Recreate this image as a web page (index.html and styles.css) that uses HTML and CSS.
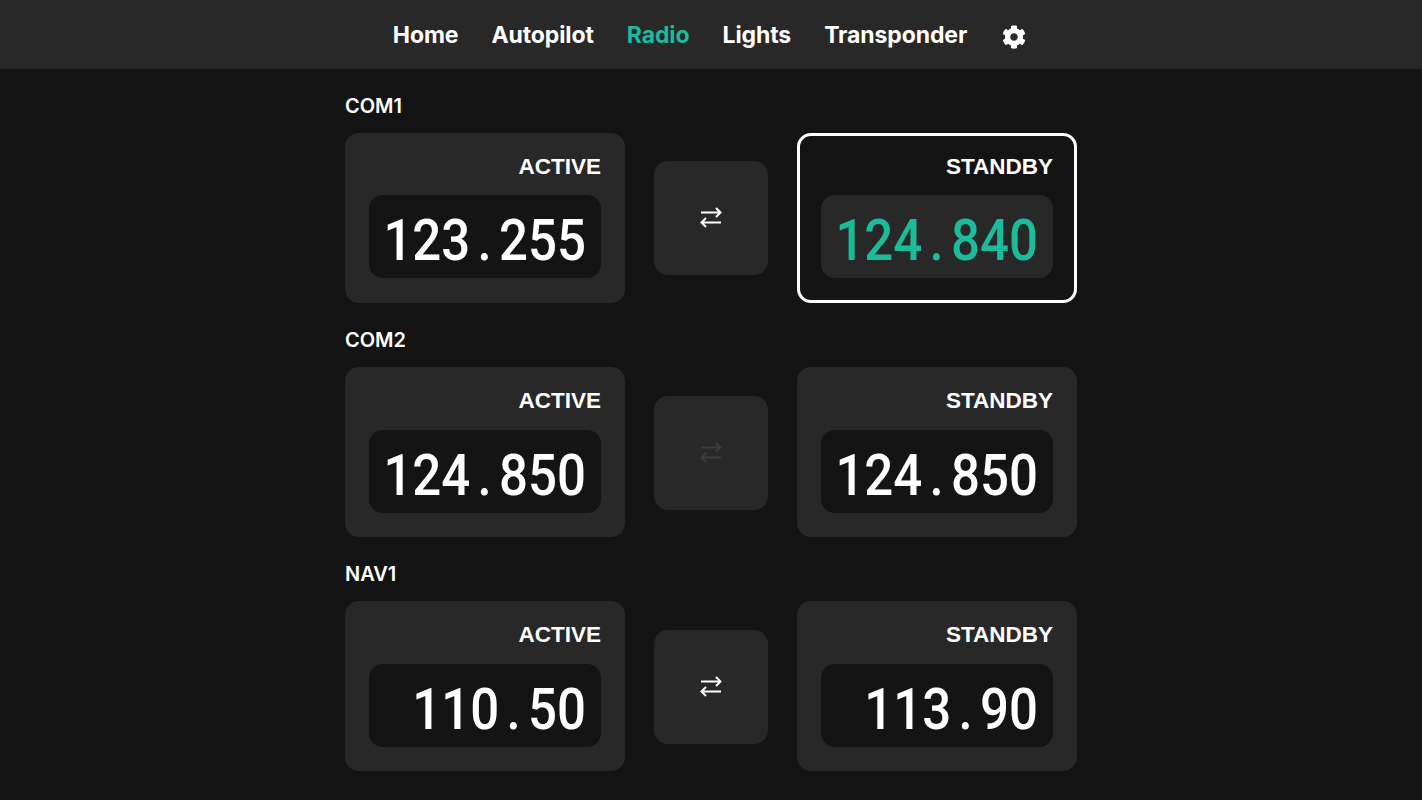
FILE: index.html
```html
<!DOCTYPE html>
<html lang="en">
<head>
    <meta charset="UTF-8">
    <title>Radio</title>
    <link rel="stylesheet" href="styles.css">
</head>
<body>
    <header class="topbar">
        <nav class="nav">
            <a href="#">Home</a>
            <a href="#">Autopilot</a>
            <a href="#" class="current">Radio</a>
            <a href="#">Lights</a>
            <a href="#">Transponder</a>
            <a href="#" class="nav-icon" aria-label="Settings">
                <svg viewBox="0 0 512 512" width="24" height="24"><path fill="currentColor" d="M487.4 315.7l-42.6-24.6c4.3-23.2 4.3-47 0-70.2l42.6-24.6c4.9-2.8 7.1-8.6 5.5-14-11.1-35.6-30-67.8-54.7-94.6-3.8-4.1-10-5.1-14.8-2.3L380.8 110c-17.9-15.4-38.5-27.3-60.8-35.1V25.8c0-5.6-3.9-10.5-9.4-11.7-36.7-8.2-74.3-7.8-109.2 0-5.5 1.2-9.4 6.1-9.4 11.7V75c-22.2 7.9-42.8 19.8-60.8 35.1L88.7 85.5c-4.9-2.8-11-1.9-14.8 2.3-24.7 26.7-43.6 58.9-54.7 94.6-1.7 5.4.6 11.2 5.5 14L67.3 221c-4.3 23.2-4.3 47 0 70.2l-42.6 24.6c-4.9 2.8-7.1 8.6-5.5 14 11.1 35.6 30 67.8 54.7 94.6 3.8 4.1 10 5.1 14.8 2.3l42.6-24.6c17.9 15.4 38.5 27.3 60.8 35.1v49.2c0 5.6 3.9 10.5 9.4 11.7 36.7 8.2 74.3 7.8 109.2 0 5.5-1.2 9.4-6.1 9.4-11.7v-49.2c22.2-7.9 42.8-19.8 60.8-35.1l42.6 24.6c4.9 2.8 11 1.9 14.8-2.3 24.7-26.7 43.6-58.9 54.7-94.6 1.5-5.5-.7-11.3-5.6-14.1zM256 336c-44.1 0-80-35.9-80-80s35.9-80 80-80 80 35.9 80 80-35.9 80-80 80z"/></svg>
            </a>
        </nav>
    </header>

    <main class="radios">
        <section class="radio">
            <h2 class="radio-name">COM1</h2>
            <div class="radio-row">
                <div class="freq">
                    <div class="freq-label">ACTIVE</div>
                    <div class="freq-display"><span class="digits">123<span class="dot">.</span>255</span></div>
                </div>
                <button class="swap" aria-label="Swap">
                    <svg viewBox="0 0 24 24" width="24" height="24"><path d="M2 6.500h19M17 2L21.500 6.500 17 11M22 16.500H3M7 12L2.500 16.500 7 21"/></svg>
                </button>
                <div class="freq selected">
                    <div class="freq-label">STANDBY</div>
                    <div class="freq-display"><span class="digits">124<span class="dot">.</span>840</span></div>
                </div>
            </div>
        </section>

        <section class="radio">
            <h2 class="radio-name">COM2</h2>
            <div class="radio-row">
                <div class="freq">
                    <div class="freq-label">ACTIVE</div>
                    <div class="freq-display"><span class="digits">124<span class="dot">.</span>850</span></div>
                </div>
                <button class="swap disabled" aria-label="Swap" disabled>
                    <svg viewBox="0 0 24 24" width="24" height="24"><path d="M2 6.500h19M17 2L21.500 6.500 17 11M22 16.500H3M7 12L2.500 16.500 7 21"/></svg>
                </button>
                <div class="freq">
                    <div class="freq-label">STANDBY</div>
                    <div class="freq-display"><span class="digits">124<span class="dot">.</span>850</span></div>
                </div>
            </div>
        </section>

        <section class="radio">
            <h2 class="radio-name">NAV1</h2>
            <div class="radio-row">
                <div class="freq">
                    <div class="freq-label">ACTIVE</div>
                    <div class="freq-display"><span class="digits">110<span class="dot">.</span>50</span></div>
                </div>
                <button class="swap" aria-label="Swap">
                    <svg viewBox="0 0 24 24" width="24" height="24"><path d="M2 6.500h19M17 2L21.500 6.500 17 11M22 16.500H3M7 12L2.500 16.500 7 21"/></svg>
                </button>
                <div class="freq">
                    <div class="freq-label">STANDBY</div>
                    <div class="freq-display"><span class="digits">113<span class="dot">.</span>90</span></div>
                </div>
            </div>
        </section>
    </main>
</body>
</html>
```

FILE: styles.css
```css
body {
    margin: 0;
    background-color: #141414;
    color: #fff;
    font-family: Inter, "Liberation Sans", Arial, sans-serif;
    overflow: hidden;
}

.topbar {
    height: 69px;
    background-color: #282828;
}

.nav {
    display: flex;
    justify-content: center;
    align-items: center;
    gap: 33px;
    height: 100%;
    padding-right: 3px;
    box-sizing: border-box;
}

.nav a {
    color: #fff;
    text-decoration: none;
    font-size: 23px;
    font-weight: 700;
    letter-spacing: -0.1px;
}

.nav a.current {
    color: #1abc9c;
}

.nav-icon {
    display: flex;
    margin: 4px 0 0 2px;
}

.radios {
    width: 732px;
    margin: 0 auto;
    padding-top: 25.1px;
}

.radio {
    margin-bottom: 25.15px;
}

.radio-name {
    margin: 0 0 15px;
    font-size: 20px;
    font-weight: 600;
    line-height: 24px;
}

.radio-row {
    display: flex;
    justify-content: space-between;
    align-items: center;
}

.freq {
    box-sizing: border-box;
    width: 280px;
    height: 170px;
    padding: 24px 24px 24.7px;
    background-color: #282828;
    border-radius: 14px;
}

.freq-label {
    margin-bottom: 18.3px;
    font-family: "Liberation Sans", Arial, sans-serif;
    font-size: 22.5px;
    font-weight: 700;
    line-height: 20px;
    text-align: right;
}

.freq-display {
    display: flex;
    justify-content: flex-end;
    align-items: center;
    height: 83px;
    padding: 8px 15px 0 0;
    box-sizing: border-box;
    background-color: #141414;
    border-radius: 14px;
}

.digits {
    display: inline-block;
    font-family: Roboto, sans-serif;
    font-size: 51px;
    font-weight: 500;
    line-height: 1;
    white-space: nowrap;
    transform: scaleY(1.14);
}

.dot {
    display: inline-block;
    width: 28.7px;
    text-align: center;
}

/* selected card swaps the two greys */
.freq.selected {
    padding: 21px 21px 21.7px;
    background-color: #141414;
    border: 3px solid #fff;
}

.freq.selected .freq-display {
    background-color: #282828;
}

.freq.selected .digits {
    color: #1abc9c;
}

.swap {
    display: flex;
    justify-content: center;
    align-items: center;
    width: 114px;
    height: 114px;
    margin-top: 0.6px;
    padding: 0;
    background-color: #282828;
    border: none;
    border-radius: 14px;
    color: #fff;
}

.swap svg {
    fill: none;
    stroke: currentColor;
    stroke-width: 2;
}

.swap.disabled {
    color: #3c3c3c;
}
```
